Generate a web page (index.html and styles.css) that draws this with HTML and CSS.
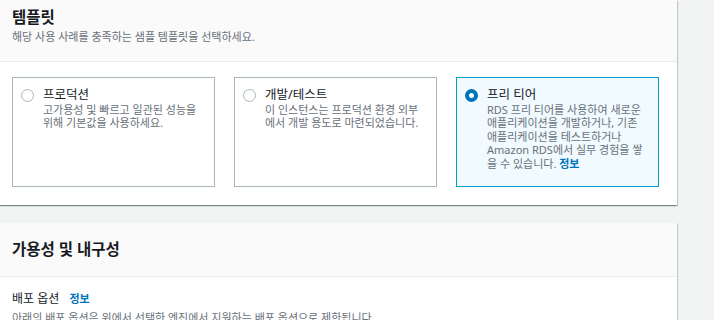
FILE: index.html
```html
<!DOCTYPE html>
<html lang="ko">
  <head>
    <meta charset="UTF-8" />
    <meta name="viewport" content="width=device-width, initial-scale=1.0" />
    <title>데이터베이스 생성</title>
    <link rel="stylesheet" href="styles.css">
  </head>
  <body>
    <div class="page">
      <div class="panel">
        <div class="panel-header">
          <h2 class="panel-title">템플릿</h2>
          <p class="panel-desc">해당 사용 사례를 충족하는 샘플 템플릿을 선택하세요.</p>
        </div>
        <div class="panel-body template-grid">
          <label class="tile">
            <span class="radio"></span>
            <span class="tile-text">
              <span class="tile-title">프로덕션</span>
              <span class="tile-desc">고가용성 및 빠르고 일관된 성능을 위해 기본값을 사용하세요.</span>
            </span>
          </label>
          <label class="tile">
            <span class="radio"></span>
            <span class="tile-text">
              <span class="tile-title">개발/테스트</span>
              <span class="tile-desc">이 인스턴스는 프로덕션 환경 외부에서 개발 용도로 마련되었습니다.</span>
            </span>
          </label>
          <label class="tile selected">
            <span class="radio checked"></span>
            <span class="tile-text">
              <span class="tile-title">프리 티어</span>
              <span class="tile-desc">RDS 프리 티어를 사용하여 새로운 애플리케이션을 개발하거나, 기존 애플리케이션을 테스트하거나 Amazon RDS에서 실무 경험을 쌓을 수 있습니다. <a class="info" href="#">정보</a></span>
            </span>
          </label>
        </div>
      </div>

      <div class="panel second">
        <div class="panel-header tall">
          <h2 class="panel-title">가용성 및 내구성</h2>
        </div>
        <div class="panel-body">
          <div class="field-label">배포 옵션 <a class="info" href="#">정보</a></div>
          <p class="field-desc">아래의 배포 옵션은 위에서 선택한 엔진에서 지원하는 배포 옵션으로 제한됩니다.</p>
        </div>
      </div>
    </div>
  </body>
</html>
```

FILE: styles.css
```css
body {
  margin: 0;
  background-color: #f2f3f3;
  font-family: "Noto Sans", "Noto Sans CJK KR", sans-serif;
  color: #16191f;
  height: 320px;
  overflow: hidden;
}

.page {
  width: 677px;
}

.panel {
  background-color: #fff;
  box-shadow: 0 1px 1px 0 rgba(0, 28, 36, 0.3), 1px 1px 1px 0 rgba(0, 28, 36, 0.15),
    -1px 1px 1px 0 rgba(0, 28, 36, 0.15);
}

.panel.second {
  margin-top: 18px;
}

.panel-header {
  background-color: #fafafa;
  border-bottom: 1px solid #eaeded;
  padding: 7px 12px 17px 12px;
}

.panel-header.tall {
  padding: 16px 12px 17px 12px;
}

.panel-title {
  margin: 0;
  font-size: 15.5px;
  line-height: 20px;
  font-weight: bold;
}

.panel-desc {
  margin: 3px 0 0 0;
  font-size: 11px;
  line-height: 14px;
  color: #687078;
}

.panel-body {
  padding: 14px 18px 0 12px;
}

.template-grid {
  display: grid;
  grid-template-columns: repeat(3, 1fr);
  gap: 19px;
  padding: 15px 18px 18px 12px;
}

.tile {
  display: flex;
  align-items: flex-start;
  gap: 9px;
  height: 110px;
  box-sizing: border-box;
  padding: 9px 8px 0 8px;
  border: 1px solid #aab7b8;
  background-color: #fff;
  cursor: pointer;
}

.tile.selected {
  border-color: #00a1c9;
  background-color: #f1faff;
}

.radio {
  flex: none;
  width: 13px;
  height: 13px;
  margin-top: 1.5px;
  box-sizing: border-box;
  border: 1.5px solid #aab7b8;
  border-radius: 50%;
  background-color: #fff;
}

.radio.checked {
  border: 4px solid #0073bb;
}

.tile-text {
  display: flex;
  flex-direction: column;
}

.tile-title {
  font-size: 12.5px;
  line-height: 16px;
}

.tile-desc {
  font-size: 11px;
  line-height: 13.4px;
  color: #687078;
}

.info {
  color: #0073bb;
  font-weight: bold;
  font-size: 11px;
  text-decoration: none;
}

.field-label {
  font-size: 12px;
  line-height: 16px;
}

.field-label .info {
  margin-left: 7px;
}

.field-desc {
  margin: 4px 0 0 0;
  font-size: 11px;
  line-height: 14px;
  color: #687078;
}
```
